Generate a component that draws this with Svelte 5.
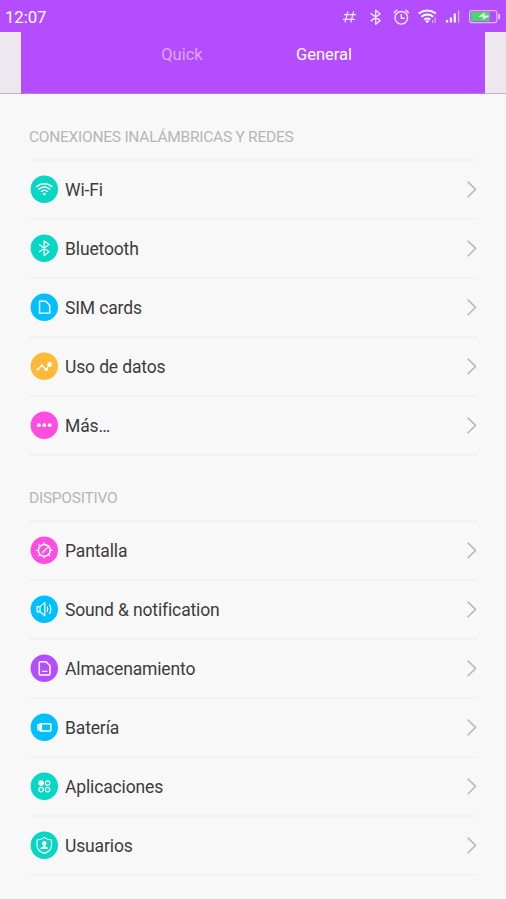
<script lang="ts">
  type Item = { icon: string; label: string; color: string };

  const sections: { title: string; items: Item[] }[] = [
    {
      title: "CONEXIONES INALÁMBRICAS Y REDES",
      items: [
        { icon: "wifi", label: "Wi-Fi", color: "teal" },
        { icon: "bluetooth", label: "Bluetooth", color: "teal" },
        { icon: "sim", label: "SIM cards", color: "blue" },
        { icon: "data", label: "Uso de datos", color: "orange" },
        { icon: "more", label: "Más…", color: "pink" },
      ],
    },
    {
      title: "DISPOSITIVO",
      items: [
        { icon: "display", label: "Pantalla", color: "pink" },
        { icon: "sound", label: "Sound & notification", color: "blue" },
        { icon: "storage", label: "Almacenamiento", color: "purple" },
        { icon: "battery", label: "Batería", color: "blue" },
        { icon: "apps", label: "Aplicaciones", color: "teal" },
        { icon: "users", label: "Usuarios", color: "teal" },
      ],
    },
  ];

  const tabs = ["Quick", "General"];
  let active = $state("General");
</script>

{#snippet glyph(name: string)}
  {#if name === "wifi"}
    <path class="bold" d="M6 11.8C10.4 7.4 17.6 7.4 22 11.8M8.2 14.3C11.4 11.1 16.6 11.1 19.8 14.3M10.6 16.6C12.6 14.8 15.4 14.8 17.4 16.6" />
    <path class="solid" d="M14 20.6l-1.9-2.3q1.9-1.4 3.8 0z" />
  {:else if name === "bluetooth"}
    <path d="M8.9 10.3l9.8 7.3-4.9 3.9V6.7l4.9 3.7-9.8 7.3" />
  {:else if name === "sim"}
    <path class="bold" d="M9.2 8h6.2l4 4v8H9.2z" />
    <path class="dash" d="M8.6 8v12.6h10.8" />
  {:else if name === "data"}
    <path d="M7.6 17l4.1-3.8 4.2 4.1 3.2-4.8" />
    <circle class="solid" cx="7.6" cy="17" r="1.3" />
    <circle class="solid" cx="11.7" cy="13.3" r="1.3" />
    <circle class="solid" cx="15.9" cy="17.4" r="1.7" />
    <circle class="solid" cx="19.3" cy="12.3" r="2.4" />
  {:else if name === "more"}
    <circle class="solid" cx="8.6" cy="14" r="1.9" />
    <circle class="solid" cx="14" cy="14" r="1.9" />
    <circle class="solid" cx="19.4" cy="14" r="1.9" />
  {:else if name === "display"}
    <circle class="bold" cx="14" cy="14.2" r="5.9" />
    <path d="M11.8 16.8l7.2-7.4M14 8.5V6M14 20v2.4M8.2 14.2H5.6M19.8 14.2h2.6M10 10.2L8.2 8.4M10 18.2l-1.8 1.8M18 18.2l1.8 1.8" />
  {:else if name === "sound"}
    <path d="M6.8 11.4h2.9l4.8-4v13.2l-4.8-4H6.8zM9.7 11.4v5.2" />
    <path d="M16.8 11.3q1.4 2.7 0 5.4M19 9.3q3.2 4.7 0 9.4" />
  {:else if name === "storage"}
    <path class="bold" d="M9.9 7.6h5.8l4 4v8.3q0 .8-.8.8H9.9q-.9 0-.9-.8V8.4q0-.8.9-.8z" />
    <path d="M11.8 17.2h5.4" />
  {:else if name === "battery"}
    <rect class="bold" x="9.6" y="10.5" width="10.9" height="7.2" rx=".6" />
    <path class="solid" d="M7 10.8h1.4v6.6H7zM9.3 10.4h2.4v7.2H9.3z" />
  {:else if name === "apps"}
    <circle class="solid" cx="10.8" cy="10.9" r="2.8" />
    <circle cx="17.3" cy="10.9" r="2.2" />
    <circle cx="10.8" cy="17.4" r="2.2" />
    <circle cx="17.3" cy="17.4" r="2.2" />
  {:else if name === "users"}
    <path d="M14 6.2q3 2.2 7.2 2.6v5.4q0 5.4-7.2 8-7.2-2.6-7.2-8V8.8q4.2-.4 7.2-2.6z" />
    <circle class="solid" cx="14" cy="12" r="2.2" />
    <path class="solid" d="M13 13h2v2.4q2.8.2 3 2.3h-8q.2-2.1 3-2.3z" />
  {/if}
{/snippet}

<div class="screen">
  <header>
    <div class="status">
      <span class="time">12:07</span>
      <svg class="tray" width="162" height="20" viewBox="340 7 162 20">
        <path d="M347.8 11.5l-2.8 11M353.6 11.5l-2.8 11M344 14.7h12M343 19.3h12" />
        <path class="medium" d="M370.7 13.2l9.4 7.4-4.4 3.6V10.3l4.4 3.4-9.4 7.4" />
        <circle class="medium" cx="401.3" cy="17.8" r="6.3" />
        <path class="medium" d="M401.3 14v4.2h3.5M394 13.2q1-2.2 3.4-3.2M408.6 13.2q-1-2.2-3.4-3.2" />
        <path class="thick" d="M418.6 13.6q8.7-6.2 17.4 0M421.3 16.7q6-4.4 12 0M424.2 19.6q3.1-2.2 6.2 0" />
        <path class="solid" d="M427.3 23.2l-2.2-2.2q2.2-1.4 4.4 0z" />
        <path class="faint" d="M435.2 17.5v5.5M432.6 20v3" />
        <path class="bars" d="M447 20v2.4M450.9 17.6v4.8M454.8 13.4v9" />
        <path class="faint" d="M458.6 10.2v12.2" />
        <rect class="case" x="469.6" y="10.6" width="27.2" height="12" rx="2" />
        <path class="case-tip" d="M498.2 14h1.8v5.3h-1.8z" />
        <rect class="charge" x="471" y="12" width="18.5" height="9.2" />
        <path class="solid" d="M478.3 16.8l6.4-4.3-.4 3 5.6.2-7.4 4 .8-3z" />
      </svg>
    </div>
    <div class="tabbar">
      <nav>
        {#each tabs as tab (tab)}
          <button class:active={tab === active} onclick={() => (active = tab)}>{tab}</button>
        {/each}
      </nav>
    </div>
  </header>

  <main>
    {#each sections as section (section.title)}
      <section>
        <h2>{section.title}</h2>
        <ul>
          {#each section.items as item (item.label)}
            <li>
              <svg class="icon {item.color}" width="28" height="28" viewBox="-0.3 -0.2 28 28">
                <circle class="disc" cx="14" cy="14" r="13.7" />
                {@render glyph(item.icon)}
              </svg>
              <span class="label">{item.label}</span>
              <svg class="chevron" width="12" height="18" viewBox="0 0 12 18">
                <path d="M2.6 1.6l8 7.8-8 7.8" />
              </svg>
            </li>
          {/each}
        </ul>
      </section>
    {/each}
  </main>
</div>

<style>
  :global(body) {
    background: #f8f8f8;
  }
  .screen {
    width: 506px;
    height: 899px;
    overflow: hidden;
    background: #f8f8f8;
    font-family: Roboto, sans-serif;
    color: #3c3c3c;
  }
  svg {
    flex: none;
    fill: none;
    stroke-linejoin: round;
  }
  .status {
    height: 32px;
    box-sizing: border-box;
    padding: 2px 4px 0 5px;
    display: flex;
    align-items: center;
    justify-content: space-between;
    background: #b44dff;
  }
  .time {
    color: #fff;
    font-size: 16.8px;
    letter-spacing: -0.1px;
  }
  .tray {
    stroke: #f6e8ff;
    stroke-width: 1.2;
  }
  .tray .medium {
    stroke-width: 1.4;
  }
  .tray .thick {
    stroke: #fff;
    stroke-width: 1.8;
  }
  .tray .bars {
    stroke: #fff;
    stroke-width: 2.2;
  }
  .tray .faint {
    stroke: #dcb0ff;
  }
  .tray .solid {
    fill: #fff;
    stroke: none;
  }
  .tray .case {
    stroke: #e0b8ff;
  }
  .tray .case-tip {
    fill: #e6c6ff;
    stroke: none;
  }
  .tray .charge {
    fill: #4cd470;
    stroke: none;
  }
  .tabbar {
    height: 62px;
    box-sizing: border-box;
    padding: 0 21px;
    background: #ede8ef;
    border-bottom: 1px solid #bdb8bf;
  }
  nav {
    height: 62px;
    box-sizing: border-box;
    padding: 0 90px;
    display: grid;
    grid-template-columns: 1fr 1fr;
    background: #b44dff;
    border-bottom: 1px solid #b877ea;
  }
  nav button {
    height: 44px;
    padding: 0;
    border: 0;
    background: none;
    color: #dfa6fb;
    font: 16.5px Roboto, sans-serif;
  }
  nav button.active {
    color: #fff;
  }
  main {
    padding: 0 29px;
  }
  h2 {
    margin: 0;
    height: 66px;
    box-sizing: border-box;
    padding-top: 19px;
    border-bottom: 2px solid #f2f2f2;
    color: #b6b6b6;
    font-size: 15.5px;
    font-weight: 400;
    letter-spacing: -0.25px;
    line-height: 46px;
  }
  section:first-child h2 {
    height: 67px;
    padding-top: 20px;
  }
  ul {
    margin: 0;
    padding: 0;
    list-style: none;
  }
  li {
    height: 59px;
    box-sizing: border-box;
    padding: 0 0 1px 1px;
    display: flex;
    align-items: center;
    border-bottom: 2px solid #f2f2f2;
  }
  .icon {
    stroke: #fff;
    stroke-width: 1.2;
  }
  .icon .disc {
    fill: currentColor;
    stroke: none;
  }
  .icon .bold {
    stroke-width: 1.5;
  }
  .icon .solid {
    fill: #fff;
    stroke: none;
  }
  .icon .dash {
    stroke: #00bfff;
    stroke-width: 1;
    stroke-dasharray: 1 1.4;
    stroke-opacity: 0.6;
  }
  .teal {
    color: #06d6c4;
  }
  .blue {
    color: #00bfff;
  }
  .orange {
    color: #ffb938;
  }
  .pink {
    color: #ff4de1;
  }
  .purple {
    color: #b44dff;
  }
  .label {
    flex: 1;
    padding: 2px 0 0 7px;
    font-size: 17.5px;
    letter-spacing: -0.14px;
    line-height: 22px;
  }
  .chevron {
    stroke: #b9b9b9;
    stroke-width: 1.5;
  }
</style>
